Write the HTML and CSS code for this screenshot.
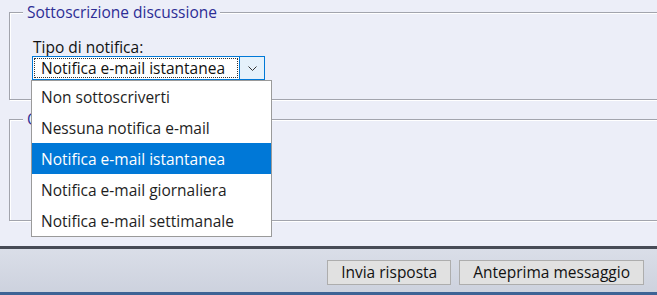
FILE: index.html
```html
<!DOCTYPE html>
<html lang="it">
<head>
<meta charset="utf-8">
<title>Sottoscrizione discussione</title>
<link rel="stylesheet" href="styles.css">
</head>
<body>
<div class="page">
  <main class="content">
    <fieldset class="group">
      <legend class="group-title">Sottoscrizione discussione</legend>
      <div class="group-body">
        <div class="field-label">Tipo di notifica:</div>
        <div class="select-wrap">
          <div class="select">
            <span class="select-value">Notifica e-mail istantanea</span>
            <span class="select-btn">
              <svg width="9" height="5" viewBox="0 0 9 5"><path d="M0.5 0.5 L4.5 4.5 L8.5 0.5" fill="none" stroke="#333" stroke-width="1"/></svg>
            </span>
          </div>
          <ul class="options">
            <li class="option">Non sottoscriverti</li>
            <li class="option">Nessuna notifica e-mail</li>
            <li class="option selected">Notifica e-mail istantanea</li>
            <li class="option">Notifica e-mail giornaliera</li>
            <li class="option">Notifica e-mail settimanale</li>
          </ul>
        </div>
      </div>
    </fieldset>
    <fieldset class="group group-second">
      <legend class="group-title">Opzioni</legend>
      <div class="group-body group-body-tall"></div>
    </fieldset>
  </main>
  <footer class="actions">
    <button class="btn">Invia risposta</button>
    <button class="btn">Anteprima messaggio</button>
  </footer>
</div>
</body>
</html>
```

FILE: styles.css
```css
* { box-sizing: border-box; }

html, body {
  margin: 0;
  padding: 0;
}

body {
  background: #eceef8;
  font-family: "Open Sans", "Noto Sans", sans-serif;
  font-size: 15px;
  color: #1e1e1e;
  overflow: hidden;
}

.page {
  width: 657px;
  height: 295px;
  display: flex;
  flex-direction: column;
}

.content {
  height: 246px;
  padding: 2px 0 0 9px;
  overflow: hidden;
}

.group {
  margin: 0 -20px 0 0;
  padding: 0;
  border: 1px solid #a2a4ad;
  box-shadow: inset 1px 1px 0 #ffffff, 1px 1px 0 #ffffff;
  min-width: 0;
}

.group-second {
  margin-top: 9px;
}

.group-title {
  margin-left: 13px;
  padding: 0 3px 0 4px;
  font-size: 15.5px;
  line-height: 20px;
  height: 20px;
  color: #2d2d95;
  background: #eceef8;
}

.group-body {
  padding: 17px 0 19px 22px;
}

.group-body-tall {
  height: 91px;
  padding: 0;
}

.field-label {
  padding-left: 1px;
  line-height: 17px;
  height: 17px;
  font-size: 15.5px;
  color: #111;
}

.select-wrap {
  position: relative;
  width: 233px;
}

.select {
  display: flex;
  height: 24px;
  border: 1px solid #0078d7;
  background: #ffffff;
}

.select-value {
  flex: 1;
  margin: 1px 0 1px 1px;
  border: 1px dotted #333;
  padding-left: 6px;
  line-height: 19px;
  font-size: 15.5px;
  color: #111;
  white-space: nowrap;
}

.select-btn {
  width: 25px;
  margin-left: 1px;
  border-left: 1px solid #0078d7;
  background: #e5f1fb;
  display: flex;
  align-items: center;
  justify-content: center;
}

.options {
  position: absolute;
  left: -1px;
  top: 24px;
  width: 241px;
  margin: 0;
  padding: 0;
  list-style: none;
  background: #ffffff;
  border: 1px solid #9a9a9a;
  z-index: 5;
}

.option {
  height: 31px;
  padding: 2px 0 0 9px;
  line-height: 29px;
  font-size: 15.5px;
  color: #1e1e1e;
  white-space: nowrap;
}

.option.selected {
  background: #0078d7;
  color: #ffffff;
}

.actions {
  height: 49px;
  border-top: 3px solid #474b56;
  border-bottom: 3px solid #3d6395;
  background: linear-gradient(#dadee8, #cdd2de);
  display: flex;
  justify-content: flex-end;
  align-items: flex-start;
  gap: 8px;
  padding: 11px 13px 0 0;
}

.btn {
  height: 25px;
  margin: 0;
  padding: 0 13px;
  border: 1px solid #adadad;
  background: #e1e1e1;
  font-family: "Open Sans", "Noto Sans", sans-serif;
  font-size: 15.5px;
  line-height: 21px;
  color: #111;
}
```
